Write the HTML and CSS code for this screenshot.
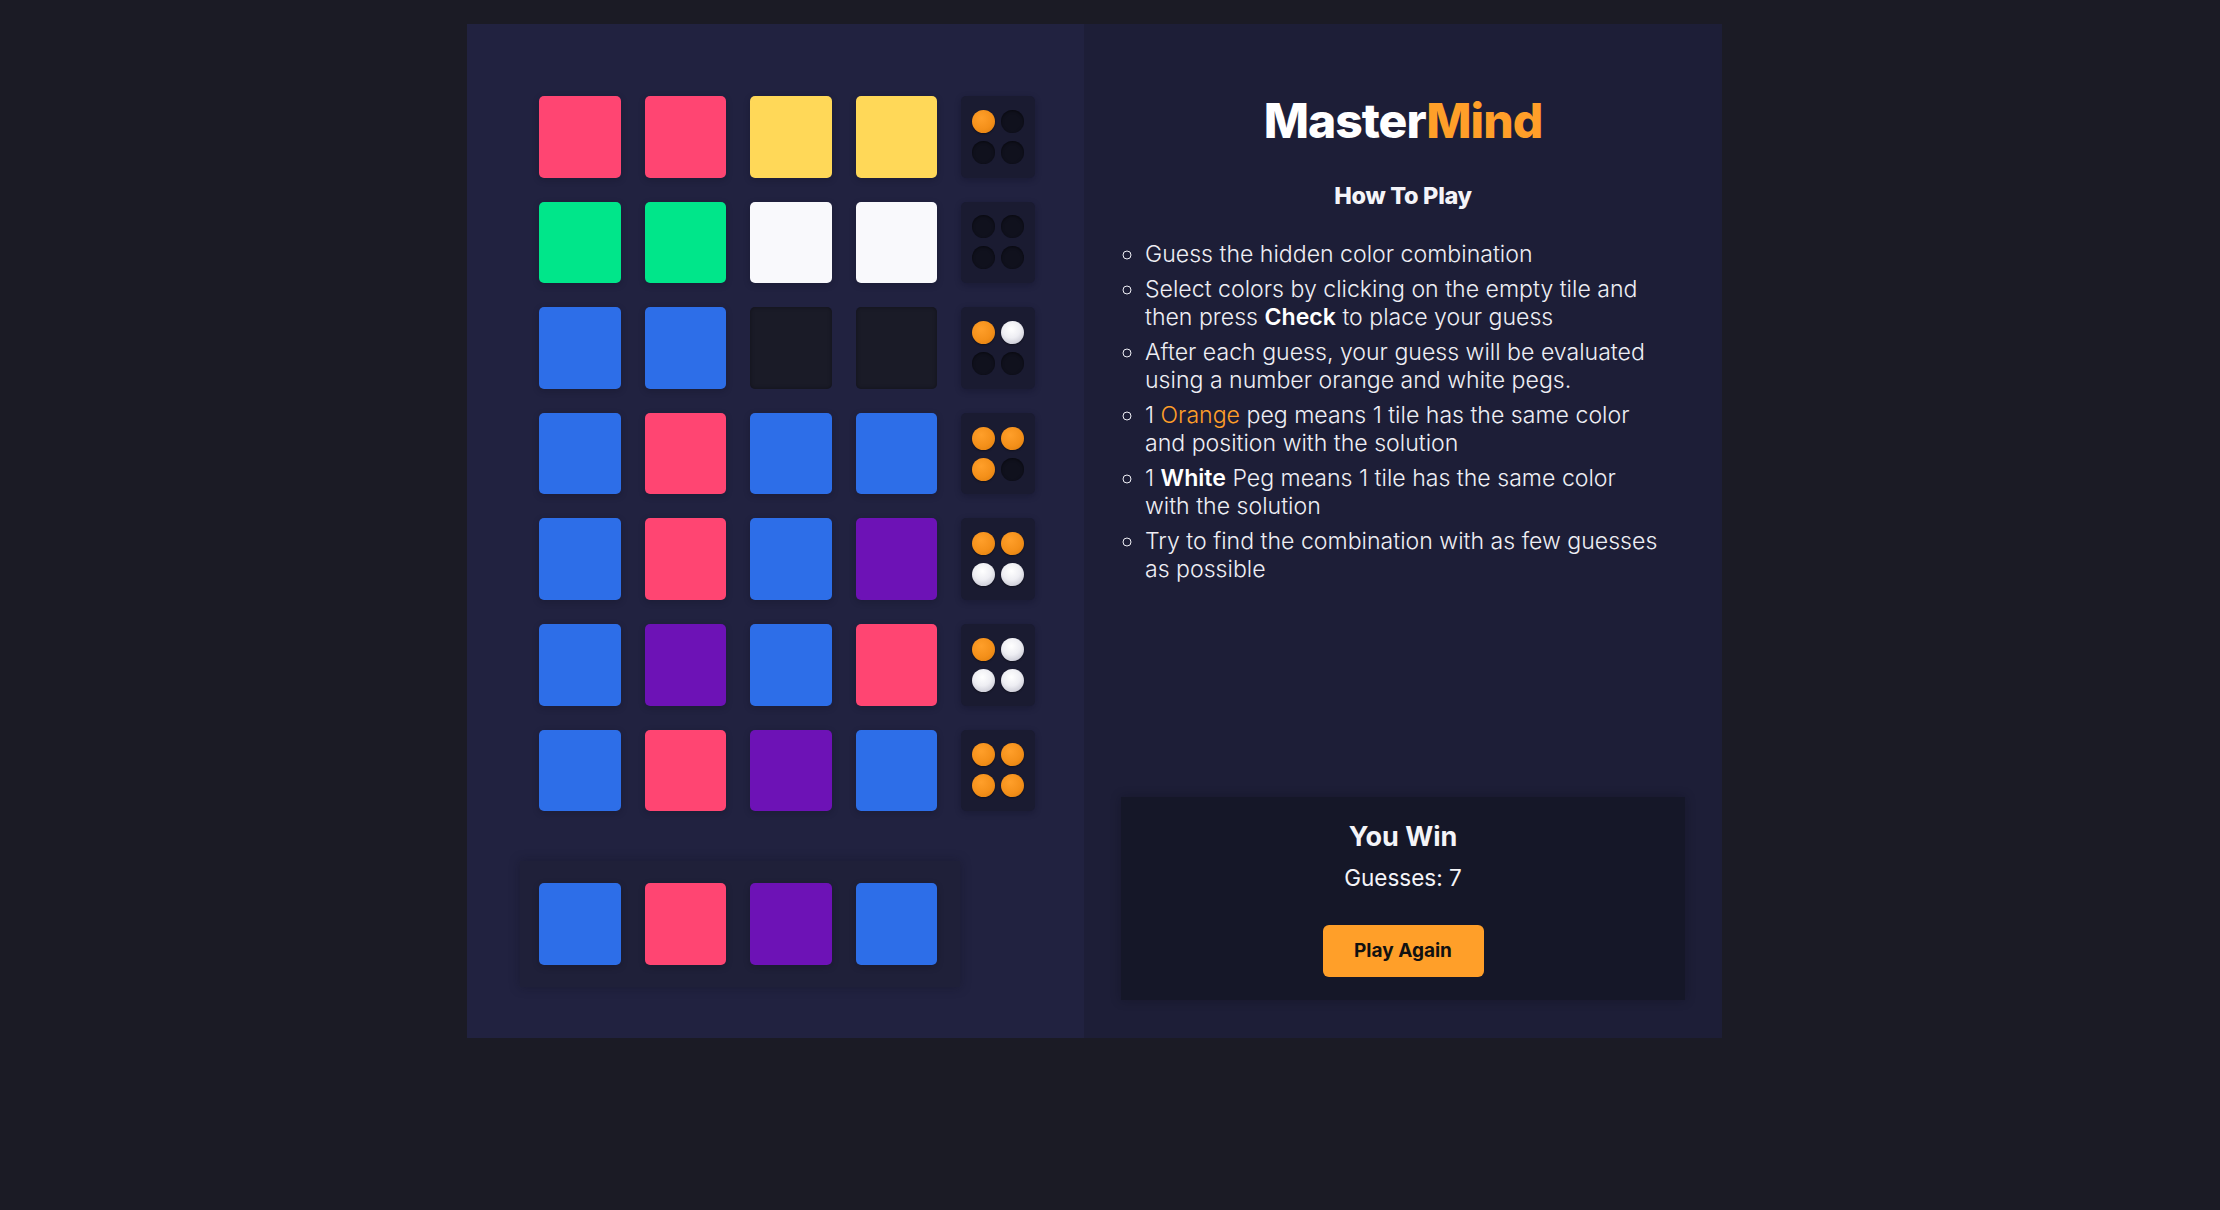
FILE: index.html
```html
<!DOCTYPE html>
<html lang="en">
<head>
<meta charset="utf-8">
<title>MasterMind</title>
<link rel="stylesheet" href="styles.css">
</head>
<body>
<main class="app">
  <section class="board-panel">
    <div class="board">
      <div class="row">
        <div class="tile pink"></div><div class="tile pink"></div><div class="tile yellow"></div><div class="tile yellow"></div>
        <div class="pegs"><span class="peg orange"></span><span class="peg"></span><span class="peg"></span><span class="peg"></span></div>
      </div>
      <div class="row">
        <div class="tile green"></div><div class="tile green"></div><div class="tile white"></div><div class="tile white"></div>
        <div class="pegs"><span class="peg"></span><span class="peg"></span><span class="peg"></span><span class="peg"></span></div>
      </div>
      <div class="row">
        <div class="tile blue"></div><div class="tile blue"></div><div class="tile empty"></div><div class="tile empty"></div>
        <div class="pegs"><span class="peg orange"></span><span class="peg whitepeg"></span><span class="peg"></span><span class="peg"></span></div>
      </div>
      <div class="row">
        <div class="tile blue"></div><div class="tile pink"></div><div class="tile blue"></div><div class="tile blue"></div>
        <div class="pegs"><span class="peg orange"></span><span class="peg orange"></span><span class="peg orange"></span><span class="peg"></span></div>
      </div>
      <div class="row">
        <div class="tile blue"></div><div class="tile pink"></div><div class="tile blue"></div><div class="tile purple"></div>
        <div class="pegs"><span class="peg orange"></span><span class="peg orange"></span><span class="peg whitepeg"></span><span class="peg whitepeg"></span></div>
      </div>
      <div class="row">
        <div class="tile blue"></div><div class="tile purple"></div><div class="tile blue"></div><div class="tile pink"></div>
        <div class="pegs"><span class="peg orange"></span><span class="peg whitepeg"></span><span class="peg whitepeg"></span><span class="peg whitepeg"></span></div>
      </div>
      <div class="row">
        <div class="tile blue"></div><div class="tile pink"></div><div class="tile purple"></div><div class="tile blue"></div>
        <div class="pegs"><span class="peg orange"></span><span class="peg orange"></span><span class="peg orange"></span><span class="peg orange"></span></div>
      </div>
    </div>
    <div class="solution">
      <div class="tile blue"></div><div class="tile pink"></div><div class="tile purple"></div><div class="tile blue"></div>
    </div>
  </section>
  <section class="info-panel">
    <h1 class="title">Master<span class="accent">Mind</span></h1>
    <h2 class="subtitle">How To Play</h2>
    <ul class="rules">
      <li>Guess the hidden color combination</li>
      <li>Select colors by clicking on the empty tile and then press <strong>Check</strong> to place your guess</li>
      <li>After each guess, your guess will be evaluated using a number orange and white pegs.</li>
      <li>1 <span class="accent">Orange</span> peg means 1 tile has the same color and position with the solution</li>
      <li>1 <strong>White</strong> Peg means 1 tile has the same color with the solution</li>
      <li>Try to find the combination with as few guesses as possible</li>
    </ul>
    <div class="result">
      <h3 class="result-title">You Win</h3>
      <p class="result-guesses">Guesses: 7</p>
      <button class="play-btn">Play Again</button>
    </div>
  </section>
</main>
</body>
</html>
```
FILE: styles.css
```css
* { box-sizing: border-box; }

body {
  margin: 0;
  background: #1b1b25;
  font-family: "Inter", "Noto Sans", sans-serif;
  color: #f4f4f8;
}

.app {
  display: flex;
  margin: 24px 0 0 467px;
  width: 1255px;
}

.board-panel {
  width: 617px;
  background: #212240;
  padding: 72px 48px 51px 53px;
  display: flex;
  flex-direction: column;
}

.board {
  display: flex;
  flex-direction: column;
  gap: 24px;
  padding-left: 19px;
}

.row {
  display: flex;
  gap: 24px;
}

.tile {
  width: 81.6px;
  height: 81.6px;
  border-radius: 5px;
  box-shadow: 0 2px 6px rgba(10, 10, 25, 0.25);
}

.pink { background: #ff4572; }
.yellow { background: #ffd858; }
.green { background: #00e68a; }
.white { background: #f9f9fc; }
.blue { background: #2d6ee8; }
.purple { background: #6d12b6; }
.empty { background: #1a1b27; box-shadow: inset 0 0 4px rgba(0,0,0,0.35); }

.pegs {
  width: 74px;
  height: 81.6px;
  background: #1a1b31;
  border-radius: 5px;
  display: grid;
  grid-template-columns: 23px 23px;
  grid-template-rows: 23px 23px;
  gap: 8px 6px;
  place-content: center;
  box-shadow: 0 2px 6px rgba(10, 10, 25, 0.3);
}

.peg {
  width: 23px;
  height: 23px;
  border-radius: 50%;
  background: #10111d;
  box-shadow: inset 0 1px 3px rgba(0, 0, 0, 0.5);
}

.peg.orange {
  background: radial-gradient(circle at 40% 35%, #ff9f2a 0%, #f4901a 55%, #dc7c0c 100%);
  box-shadow: 0 1px 2px rgba(0, 0, 0, 0.4);
}

.peg.whitepeg {
  background: radial-gradient(circle at 45% 35%, #ffffff 0%, #eeeef3 45%, #b8b8c6 100%);
  box-shadow: 0 1px 2px rgba(0, 0, 0, 0.4);
}

.solution {
  margin-top: 50px;
  display: flex;
  gap: 24px;
  width: 440px;
  padding: 22px 19px;
  background: #1f2039;
  box-shadow: 0 0 10px rgba(15, 15, 30, 0.35);
}

.info-panel {
  width: 638px;
  background: #1d1e37;
  padding: 0 37px 38px 37px;
  display: flex;
  flex-direction: column;
}

.title {
  margin: 68px 0 0;
  text-align: center;
  font-size: 48px;
  line-height: 58px;
  font-weight: 800;
  letter-spacing: -1px;
  color: #ffffff;
}

.accent { color: #ff9f29; }

.subtitle {
  margin: 31px 0 0;
  text-align: center;
  font-size: 23.5px;
  line-height: 30px;
  font-weight: 800;
  letter-spacing: -0.3px;
}

.rules {
  margin: 29px 0 0;
  padding: 0 19px 0 24px;
  list-style: circle;
  font-size: 23.1px;
  line-height: 28px;
  font-weight: 300;
  color: #eeeef4;
}

.rules li { margin-bottom: 7px; padding-left: 0; }
.rules li::marker { font-size: 24px; }
.rules strong { font-weight: 600; color: #ffffff; }

.result {
  margin-top: auto;
  height: 203px;
  background: #151728;
  box-shadow: 0 0 10px rgba(10, 10, 20, 0.3);
  display: flex;
  flex-direction: column;
  align-items: center;
  padding-top: 22px;
}

.result-title {
  margin: 0;
  font-size: 27px;
  line-height: 36px;
  font-weight: 700;
}

.result-guesses {
  margin: 8px 0 0;
  font-size: 22.5px;
  line-height: 30px;
}

.play-btn {
  margin-top: 32px;
  width: 161px;
  height: 52px;
  border: none;
  border-radius: 6px;
  background: #ff9f29;
  color: #111;
  font-family: inherit;
  font-size: 19px;
  font-weight: 700;
}
```
